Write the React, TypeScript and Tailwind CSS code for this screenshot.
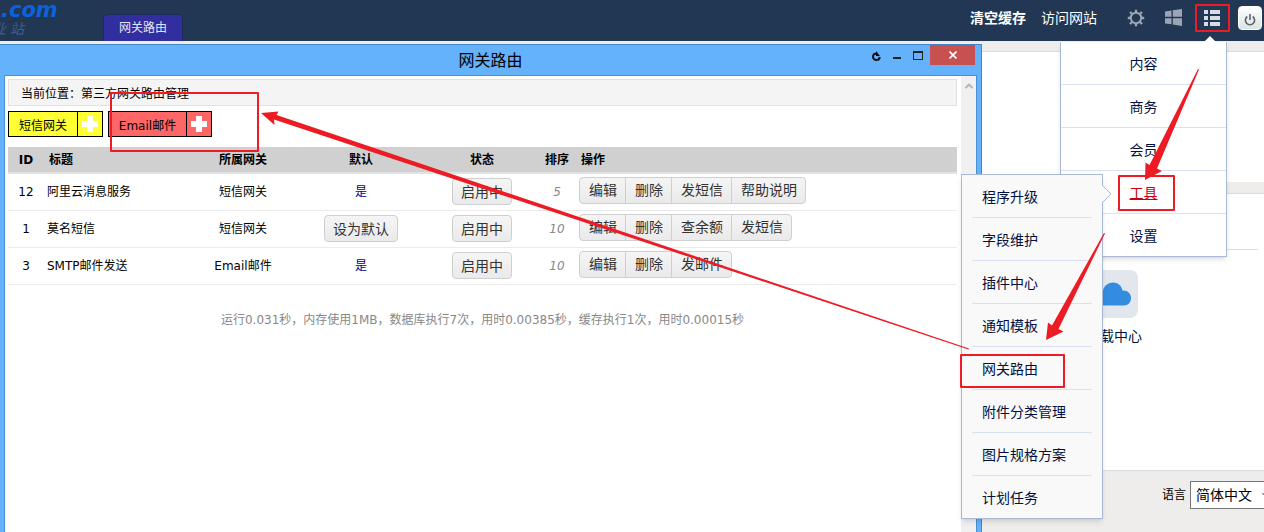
import { ChevronDown, ChevronUp } from "lucide-react";

const mainMenu = ["内容", "商务", "会员", "工具", "设置"];

const toolMenu = [
  "程序升级",
  "字段维护",
  "插件中心",
  "通知模板",
  "网关路由",
  "附件分类管理",
  "图片规格方案",
  "计划任务",
];

const gateways = [
  { id: 12, title: "阿里云消息服务", type: "短信网关", isDefault: true, sort: 5, actions: ["编辑", "删除", "发短信", "帮助说明"] },
  { id: 1, title: "莫名短信", type: "短信网关", isDefault: false, sort: 10, actions: ["编辑", "删除", "查余额", "发短信"] },
  { id: 3, title: "SMTP邮件发送", type: "Email邮件", isDefault: true, sort: 10, actions: ["编辑", "删除", "发邮件"] },
];

function GearIcon() {
  return (
    <svg width="18" height="18" viewBox="0 0 18 18" fill="none" stroke="#9aa5b4" strokeWidth="2">
      <circle cx="9" cy="9" r="5.2" />
      <path strokeWidth="2.4" d="M9 .8v2.800M9 14.400v2.800M.8 9h2.800M14.400 9h2.800M3 3l2 2M13 13l2 2M15 3l-2 2M5 13l-2 2" />
    </svg>
  );
}

function WindowsIcon() {
  return (
    <svg width="17" height="17" viewBox="0 0 17 17" fill="#9aa5b4">
      <path d="M0 2.500l6.500-1V7.800H0zM7.800 1.300L17 0v7.800H7.800zM0 9.200h6.500v6.100L0 14.400zM7.800 9.200H17V17l-9.200-1.500z" />
    </svg>
  );
}

function ListIcon() {
  return (
    <svg width="16" height="16" viewBox="0 0 16 16" fill="#d5dce5">
      <path d="M0 0h4v4H0zM6 0h10v4H6zM0 6h4v4H0zM6 6h10v4H6zM0 12h4v4H0zM6 12h10v4H6z" />
    </svg>
  );
}

function PowerIcon() {
  return (
    <svg width="12" height="12" viewBox="0 0 12 12" fill="none" stroke="#5c6468" strokeWidth="1.6">
      <path d="M3.300 2.500a4.600 4.600 0 1 0 5.400 0M6 0v6" />
    </svg>
  );
}

function Header() {
  return (
    <header className="flex h-[41px] shrink-0 overflow-hidden bg-[#213754]">
      <div className="w-[103px] shrink-0 italic">
        <p className="pl-px font-['DejaVu_Sans','Noto_Sans_CJK_SC',sans-serif] text-[21px] leading-5 font-bold text-[#0a63dc]">.com</p>
        <p className="-ml-2 flex gap-1 text-sm leading-[18px] text-[#3d618f]">
          <span>业</span>
          <span>站</span>
        </p>
      </div>
      <a href="#route" className="mt-[14px] flex h-7 w-20 items-center justify-center rounded-t-sm border border-[#1c2c55] bg-[#312f9f] text-xs text-[#e4e4f4]">
        网关路由
      </a>
      <nav className="ml-auto flex h-[35px] shrink-0 items-center pr-0.5 text-sm text-white">
        <a href="#cache" className="mr-[15px] font-bold">清空缓存</a>
        <a href="#site" className="mr-[30px]">访问网站</a>
        <button type="button" aria-label="设置" className="mr-5"><GearIcon /></button>
        <button type="button" aria-label="桌面" className="mr-[22px]"><WindowsIcon /></button>
        <button type="button" aria-label="菜单" className="mr-[18px]"><ListIcon /></button>
        <button type="button" aria-label="退出" className="flex h-6 w-6 items-center justify-center rounded-sm border border-white bg-linear-to-b from-white to-[#dbe3e3] pt-1">
          <PowerIcon />
        </button>
      </nav>
    </header>
  );
}

function Desktop() {
  return (
    <main className="flex flex-1 flex-col bg-[#eeedeb] pt-[10px]">
      <section className="h-[131px] border-t border-[#dcdcdc] bg-white" />
      <section className="mt-[11px] flex flex-1 flex-col items-end border-t border-[#dcdcdc] bg-white pr-1.5">
        <div className="h-14 w-full border-b border-[#dcdcdc]" />
        <a href="#download" className="mt-5 mr-28 flex w-16 flex-col items-center text-sm text-[#001040]">
          <span className="flex h-12 w-12 items-center justify-center rounded-lg bg-[#e2e7ee]">
            <svg width="36" height="24" viewBox="0 0 36 24" fill="#348ce0">
              <path d="M8 23.500a7.500 7.500 0 0 1-1-14.800C8 3.500 12.500.5 17 .5c5 0 8.500 3.200 9.500 8 5-.5 8.500 3 8.500 7.500s-3 7.500-7 7.500z" />
            </svg>
          </span>
          <span className="mt-2 whitespace-nowrap">下载中心</span>
        </a>
      </section>
      <footer className="flex h-[62px] items-start justify-end overflow-hidden border-t border-[#dcdcdc] pt-[10px] text-black">
        <label htmlFor="lang" className="mr-1 text-xs leading-7">语言</label>
        <div className="relative -mr-3 w-[86px] shrink-0">
          <select id="lang" className="h-7 w-full appearance-none border border-[#777] bg-white pl-[5px] text-sm">
            <option>简体中文</option>
          </select>
          <ChevronDown className="absolute top-2 right-1 h-3 w-3" />
        </div>
      </footer>
    </main>
  );
}

function AddButton({ label, color, width }: { label: string; color: string; width: string }) {
  return (
    <button type="button" className={`flex h-[26px] border border-black text-xs ${color} ${width}`}>
      <span className="flex h-full flex-1 items-center justify-center pt-1">{label}</span>
      <span className="flex h-full w-[25px] items-center justify-center border-l border-black">
        <svg width="16" height="16" viewBox="0 0 16 16" fill="#fff">
          <path d="M5 0h6v5h5v6h-5v5H5v-5H0V5h5z" />
        </svg>
      </span>
    </button>
  );
}

const grayButton = "h-[27px] border border-[#cfcfcf] bg-linear-to-b from-[#f5f5f5] to-[#eaeaea] text-sm leading-5 text-[#333]";

function GatewayTable() {
  return (
    <table className="mt-[10px] w-full table-fixed border-collapse text-center text-xs">
      <thead>
        <tr className="h-[26px] border-b-2 border-[#e2e2e2] bg-[#d0d0d0] font-bold">
          <th className="w-9">ID</th>
          <th className="w-[141px] pl-[5px] text-left">标题</th>
          <th className="w-[116px]">所属网关</th>
          <th className="w-[120px]">默认</th>
          <th className="w-[122px]">状态</th>
          <th className="w-7">排序</th>
          <th className="pl-[10px] text-left">操作</th>
        </tr>
      </thead>
      <tbody>
        {gateways.map((g) => (
          <tr key={g.id} className="h-[37px] border-b border-[#ebebeb]">
            <td>{g.id}</td>
            <td className="pl-[3px] text-left">{g.title}</td>
            <td>{g.type}</td>
            <td>
              {g.isDefault ? (
                <span className="text-[#00008b]">是</span>
              ) : (
                <button type="button" className={`${grayButton} rounded-sm px-2`}>设为默认</button>
              )}
            </td>
            <td>
              <button type="button" className={`${grayButton} rounded-sm px-2`}>启用中</button>
            </td>
            <td className="text-[#888] italic">{g.sort}</td>
            <td className="pl-2">
              <div className="flex pb-[3px]">
                {g.actions.map((action) => (
                  <button key={action} type="button" className={`${grayButton} -mr-px pr-2 pl-[9px] first:rounded-l-sm last:rounded-r-sm`}>
                    {action}
                  </button>
                ))}
              </div>
            </td>
          </tr>
        ))}
      </tbody>
    </table>
  );
}

function RouteWindow() {
  return (
    <div className="absolute top-[44px] right-[282px] bottom-0 left-0 flex flex-col border-t border-r border-[#4086c8] bg-[#64b1fc] text-black">
      <div className="relative flex h-[30px] shrink-0 justify-end pr-[6px]">
        <h1 className="absolute inset-x-0 top-[5px] text-center text-base leading-[22px]">网关路由</h1>
        <div className="relative flex items-start">
          <button type="button" aria-label="刷新" className="mt-1.5 mr-3">
            <svg width="9" height="10" viewBox="0 0 9 10" fill="none" stroke="#111" strokeWidth="2">
              <path d="M5 2.500C2.500 2.500 1 4 1 5.800 1 7.600 2.600 9 4.400 9 6.200 9 7.500 7.800 7.800 6" />
              <path d="M4 0v5h4z" fill="#111" stroke="none" />
            </svg>
          </button>
          <button type="button" aria-label="最小化" className="mt-3 mr-3 h-0.5 w-2 bg-[#222]" />
          <button type="button" aria-label="最大化" className="mt-1.5 mr-[7px] h-[9px] w-[10px] border border-t-2 border-[#222]" />
          <button type="button" aria-label="关闭" className="flex h-5 w-[45px] items-center justify-center bg-[#c75050]">
            <svg width="8" height="8" viewBox="0 0 8 8" stroke="#fff" strokeWidth="1.600">
              <path d="M.5.5l7 7M7.500.5l-7 7" />
            </svg>
          </button>
        </div>
      </div>
      <div className="mr-1 ml-1 flex flex-1 border border-b-0 border-[#4c8fd0] bg-white">
        <div className="min-w-0 flex-1 pt-[3px] pr-1 pl-[3px]">
          <div className="h-[27px] border border-[#e1e1e1] bg-[#f4f4f4] pl-3 text-xs leading-7">当前位置：第三方网关路由管理</div>
          <div className="mt-[5px] flex gap-[5px]">
            <AddButton label="短信网关" color="bg-[#ffff33]" width="w-[95px]" />
            <AddButton label="Email邮件" color="bg-[#ff6666]" width="w-[104px]" />
          </div>
          <GatewayTable />
          <p className="mt-[26px] text-center text-xs leading-[18px] text-[#888]">
            运行0.031秒，内存使用1MB，数据库执行7次，用时0.00385秒，缓存执行1次，用时0.00015秒
          </p>
        </div>
        <div className="flex w-[15px] justify-center bg-[#f0f0f0] pt-1">
          <ChevronUp className="h-3 w-3 text-[#b5b5b5]" strokeWidth={4} />
        </div>
      </div>
    </div>
  );
}

function MainMenu() {
  return (
    <div className="absolute top-[42px] right-[37px] w-[167px] border border-t-0 border-[#a9b9d6] bg-white text-sm text-[#001040] shadow-md">
      <span className="absolute -top-1.5 right-[10px] border-x-6 border-b-6 border-x-transparent border-b-white" />
      <ul>
        {mainMenu.map((item) => (
          <li key={item} className="border-b border-[#d9e0ef] last:border-b-0">
            <a href="#menu" className={`block h-[42px] text-center leading-[44px] ${item === "工具" ? "text-[#c8000a] underline" : ""}`}>
              {item}
            </a>
          </li>
        ))}
      </ul>
    </div>
  );
}

function ToolMenu() {
  return (
    <div className="absolute top-[174px] right-[161px] w-[142px] border border-[#a9b9d6] bg-[#f9f9f9] px-[10px] text-sm text-[#001040] shadow-md">
      <svg className="absolute top-[9px] -right-[10px]" width="10" height="20" viewBox="0 0 10 20">
        <path d="M0 1l9 9-9 9z" fill="#f9f9f9" />
        <path d="M0 1l9 9-9 9" fill="none" stroke="#a9b9d6" />
      </svg>
      <ul>
        {toolMenu.map((item) => (
          <li key={item} className="border-b border-[#d9e0ef] last:border-b-0">
            <a href="#tool" className="block h-[42px] pl-[10px] leading-[44px]">{item}</a>
          </li>
        ))}
      </ul>
    </div>
  );
}

// hand-drawn red marks on top of everything
function Marks() {
  return (
    <svg className="pointer-events-none absolute top-0 left-0" width="1264" height="532" viewBox="0 0 1264 532">
      <g fill="none" stroke="#ed1c24" strokeWidth="2" strokeLinejoin="round">
        <rect x="111" y="93" width="147" height="58" />
        <rect x="1196" y="5" width="33" height="26" />
        <rect x="1119" y="176" width="55" height="34" />
        <rect x="961" y="355" width="103" height="32" />
      </g>
      <g fill="#ed1c24">
        <path d="M261 113l17.500-1.500-2 3.500L969 348.500l-.5 1L274 119.500l.5 5.500z" />
        <path d="M1145 180l.5-17.500 4 2.500L1198 69l1 .5-42 99 5 2.500z" />
        <path d="M1046 340l2-17.500 4 3L1104 233l1 .5-46.500 95.500 5 2.500z" />
      </g>
    </svg>
  );
}

export default function App() {
  return (
    <div className="relative flex min-h-screen flex-col overflow-hidden font-['DejaVu_Sans','Noto_Sans_CJK_SC',sans-serif]" lang="zh-CN">
      <Header />
      <Desktop />
      <RouteWindow />
      <MainMenu />
      <ToolMenu />
      <Marks />
    </div>
  );
}
